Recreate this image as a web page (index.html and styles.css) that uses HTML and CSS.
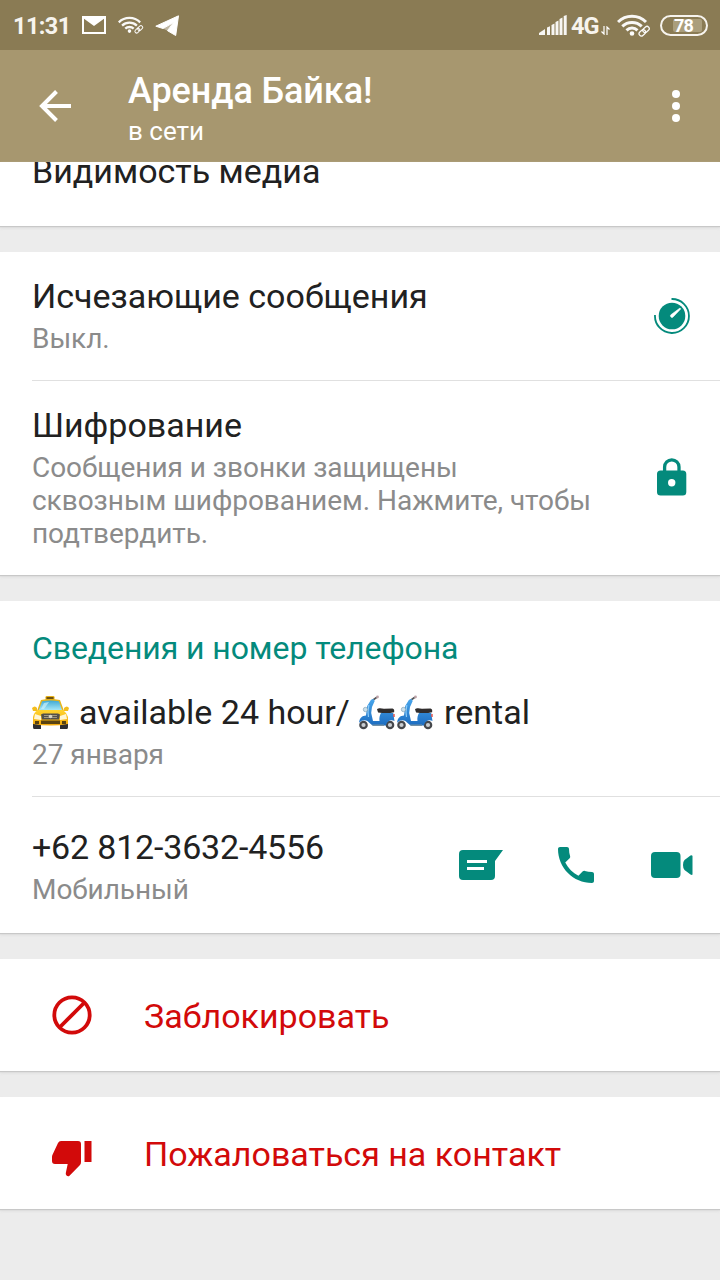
FILE: index.html
```html
<!DOCTYPE html>
<html lang="ru">
<head>
<meta charset="utf-8">
<title>Аренда Байка!</title>
<link rel="stylesheet" href="styles.css">
</head>
<body>
<svg class="defs" aria-hidden="true">
  <defs>
    <linearGradient id="glass" x1="0" y1="0" x2="0" y2="1"><stop offset="0" stop-color="#3fa9d4"/><stop offset="1" stop-color="#a5e6f7"/></linearGradient>
    <linearGradient id="body" x1="0" y1="0" x2="0" y2="1"><stop offset="0" stop-color="#ffd42e"/><stop offset="1" stop-color="#f3a90c"/></linearGradient>
    <linearGradient id="blue" x1="0" y1="0" x2="0" y2="1"><stop offset="0" stop-color="#48a6ec"/><stop offset="1" stop-color="#1c6cc0"/></linearGradient>
    <symbol id="scooter" viewBox="0 0 38 36">
      <circle cx="5.500" cy="30" r="4.300" fill="#45474b"/><circle cx="5.500" cy="30" r="2.100" fill="#c9cdd1"/>
      <circle cx="32" cy="30" r="4.300" fill="#45474b"/><circle cx="32" cy="30" r="2.100" fill="#c9cdd1"/>
      <path d="M15 5l3.500-2.500" stroke="#55565b" stroke-width="1.600" fill="none" stroke-linecap="round"/>
      <circle cx="19.500" cy="2" r="1.400" fill="#bda3a8"/>
      <path d="M13 4.800l2.500-.8 1.200 2L14 12l-.8 6 1.800 8h6.500c-.5-3 .2-6 1.500-8h12.200l.8 5 .5 3c-3-1.500-7.500-.5-8.500 4.500H14.500l-3.500-3c-2.500-3-7-2.800-9.800.3-.2-4.500 3.300-7.300 6.800-7.300l1.200-9.500z" fill="url(#blue)"/>
      <path d="M10.800 10l-.8 7 .5 5" stroke="#8ccbf7" stroke-width="1.200" fill="none"/>
      <circle cx="7.500" cy="14.500" r="2.200" fill="#c9e0ed" stroke="#7695aa" stroke-width=".6"/>
      <path d="M19 14.300c1.500-1.500 4-1.100 7-.6l8.500-.2q2.300.8 1.600 3.700c-5 1.300-11 .9-16 .3z" fill="#302d2d"/>
      <path d="M15 31h11v-1.500H14z" fill="#7190a6"/>
      <path d="M36 19v3" stroke="#e34b43" stroke-width="1.400"/>
    </symbol>
  </defs>
</svg>
<div class="screen">
  <header class="status">
    <span class="clock">11:31</span>
    <svg class="st-mail" width="24" height="18" viewBox="0 0 24 18"><path fill="none" stroke="#fff" stroke-width="2" d="M1 1h22v16H1z"/><path fill="#fff" d="M1 0h22v2L12 10 1 2z"/></svg>
    <svg class="st-wifi" width="26" height="20" viewBox="0 0 34 23"><use href="#wifi"/></svg>
    <svg class="st-tg" width="25" height="22" viewBox="0 0 25 22"><path fill="#fff" stroke="#fff" stroke-linejoin="round" d="M23.500.8L20.700 20.500l-8.200-4.800L18.500 7.500 8 13.500.8 11.200z"/><path fill="#fff" d="M8 13.500L18.500 7.500 12.500 15.700z" fill-opacity=".45"/></svg>
    <span class="spring"></span>
    <svg class="st-signal" width="28" height="20" viewBox="0 0 28 20"><path fill="#fff" fill-opacity=".93" d="M0 18l6-4v6H0zM8 12.500l3-1.200V20H8zM12.500 10l3-1.500V20h-3zM16.500 7l3-1.500V20h-3zM20.500 4l3-1.500V20h-3zM24.700 1l3-1v20h-3z"/></svg>
    <span class="net">4G</span>
    <svg class="st-arrows" width="9" height="9" viewBox="0 0 9 9"><path fill="none" stroke="#fff" stroke-width="1.200" d="M3 0v8L.5 5.500M6 9V1l2.500 2.500"/></svg>
    <svg class="st-wifi2" width="34" height="23" viewBox="0 0 34 23">
      <g id="wifi" fill="none" stroke="#fff" stroke-opacity=".95">
        <path stroke-width="3" d="M1 8a20 20 0 0 1 28 0M5.300 12.300a14 14 0 0 1 19.400 0M9.500 16.300a8 8 0 0 1 11 0"/>
        <circle cx="15" cy="19.500" r="1.600" fill="#fff" stroke-width="1.500"/>
        <g stroke-width="1.300" transform="rotate(-42 27 17)"><rect x="21" y="15" width="7" height="4.500" rx="2.200"/><rect x="26" y="15" width="7" height="4.500" rx="2.200"/></g>
      </g>
    </svg>
    <span class="battery"><span class="level">78</span></span>
  </header>

  <div class="appbar">
    <svg class="back" width="32" height="32" viewBox="0 0 32 32"><path fill="none" stroke="#fff" stroke-width="4" d="M32 16H4M17.500 1.500L3 16l14.500 14.500"/></svg>
    <div class="heading">
      <div class="name">Аренда Байка!</div>
      <div class="presence">в сети</div>
    </div>
    <svg class="more" width="8" height="32" viewBox="0 0 8 32"><g fill="#fff"><circle cx="4" cy="4" r="4"/><circle cx="4" cy="16" r="4"/><circle cx="4" cy="28" r="4"/></g></svg>
  </div>

  <main class="content">
    <section class="card media"><div class="title t-media">Видимость медиа</div></section>

    <section class="card">
      <div class="row timer-row">
        <div class="text">
          <div class="title t-timer">Исчезающие сообщения</div>
          <div class="sub">Выкл.</div>
        </div>
        <svg class="i-timer" width="36" height="36" viewBox="0 0 36 36"><circle cx="18" cy="18" r="13.300" fill="#048a7c"/><path fill="none" stroke="#048a7c" stroke-width="1.800" d="M17.500 1A17 17 0 1 1 1 17"/><path fill="#fff" d="M26 10l.7.900-7.600 8a1.500 1.500 0 0 1-2.200-2.100z" stroke="#fff" stroke-width=".6"/></svg>
      </div>
      <div class="row crypt-row">
        <div class="text">
          <div class="title t-crypt">Шифрование</div>
          <div class="sub">Сообщения и звонки защищены<br>сквозным шифрованием. Нажмите, чтобы<br>подтвердить.</div>
        </div>
        <svg class="i-lock" width="30" height="38" viewBox="0 0 30 38"><path fill="none" stroke="#048a7c" stroke-width="3.300" d="M7.600 14V9a7.200 7.200 0 0 1 14.400 0v5"/><rect y="12.500" width="29.300" height="25" rx="3.500" fill="#048a7c"/><circle cx="14.700" cy="24.800" r="3.700" fill="#fff"/></svg>
      </div>
    </section>

    <section class="card">
      <div class="row about-row">
        <div class="text">
          <div class="title section-title">Сведения и номер телефона</div>
          <div class="title about">
            <svg class="taxi" role="img" aria-label="🚖" width="37" height="35" viewBox="0 0 37 35">
              <path fill="#2e2e33" d="M1 27h8v7H2q-1 0-1-2zM28 27h8v5q0 2-1 2h-7z"/>
              <rect x="13.500" y="1" width="9" height="5" rx="1.200" fill="#e7b119"/><rect x="14.500" y="2" width="7" height="2.300" fill="#6b5114"/>
              <path fill="#e9b519" d="M9 5q9-2 19 0l4 11H5z"/>
              <path fill="url(#glass)" d="M10 6.300q8-1.500 17 0l3 8.700H7z"/>
              <path fill="#d9f6fd" d="M12 8l5-1-5 7H9z" opacity=".6"/>
              <path fill="#f4bd1c" d="M0 13q3-3 5 0v3H1zM32 13q3-3 5 0l-1 3h-4z"/>
              <path fill="url(#body)" d="M6 15h25q4 3 5 7v7q-17 3-35 0v-7q1-5 5-7z"/>
              <path fill="#fff6d4" d="M3 19l6 2v4l-7-1zM34 19l-6 2v4l7-1z"/>
              <path fill="#514f4b" d="M11 18.500h15l2 1-1 5H10l-1-5z"/><path stroke="#b4aa8b" stroke-width=".8" d="M12 20.500h13M12 22.500h13"/><circle cx="18.500" cy="21.500" r="1.800" fill="#d7d4c7"/>
              <path fill="#594312" d="M3 26h4v3H3zM9 25.500h19V29H9zM30 26h4v3h-4z"/>
            </svg><span class="about-text">available 24 hour/</span><svg class="scooter first" role="img" aria-label="🛵" width="38" height="36"><use href="#scooter"/></svg><svg class="scooter" role="img" aria-label="🛵" width="38" height="36"><use href="#scooter"/></svg><span class="rental">rental</span>
          </div>
          <div class="sub">27 января</div>
        </div>
      </div>
      <div class="row phone-row">
        <div class="text">
          <div class="title t-phone">+62 812-3632-4556</div>
          <div class="sub">Мобильный</div>
        </div>
        <div class="actions">
          <svg width="44" height="30" viewBox="0 0 44 30"><path fill="#048a7c" d="M4 0h40l-8 11v15a4 4 0 0 1-4 4H4a4 4 0 0 1-4-4V4a4 4 0 0 1 4-4z"/><path stroke="#fff" stroke-width="3" d="M8 11.500h20M8 18.500h17"/></svg>
          <svg class="call" width="36" height="36" viewBox="3 3 18 18"><path fill="#048a7c" d="M6.620 10.790c1.440 2.830 3.760 5.140 6.590 6.590l2.200-2.200c.27-.27.670-.36 1.020-.24 1.120.37 2.330.57 3.570.57.550 0 1 .45 1 1V20c0 .55-.45 1-1 1-9.390 0-17-7.610-17-17 0-.55.450-1 1-1h3.500c.55 0 1 .45 1 1 0 1.250.2 2.450.57 3.570.11.350.03.740-.25 1.020l-2.200 2.200z"/></svg>
          <svg width="42" height="26" viewBox="0 0 42 26"><rect width="29.500" height="26" rx="4" fill="#048a7c"/><path fill="#048a7c" d="M41.500 4v18.500q-.5.800-2 0L33.500 18Q32 16.500 32 13t1.500-5l6-4.500q1.500-.8 2 .5z"/></svg>
        </div>
      </div>
    </section>

    <section class="card action">
      <svg width="40" height="40" viewBox="0 0 40 40"><g fill="none" stroke="#d20a0a" stroke-width="3.800"><circle cx="20" cy="20" r="17.700"/><path d="M7.500 32.500l25-25"/></g></svg>
      <div class="title t-block">Заблокировать</div>
    </section>

    <section class="card action report">
      <svg width="40" height="36" viewBox="0 0 40 36"><path fill="#d20a0a" d="M9 0h17q3 0 3 3v18q0 2-1 3L17.500 34.700q-1.500 1.200-3-.3-1-1-.7-2.400L15.700 23H3q-3 0-3-3v-4q0-1 .4-2L6 2Q7 0 9 0zM32.500 0h7v21h-7z"/></svg>
      <div class="title t-report">Пожаловаться на контакт</div>
    </section>
  </main>
</div>
</body>
</html>
```
FILE: styles.css
```css
body { margin: 0; font-family: Roboto, "Noto Sans", sans-serif; }
.defs { position: absolute; width: 0; height: 0; }
svg { display: block; flex: none; }
.screen { width: 720px; height: 1280px; overflow: hidden; background: #ececec; display: flex; flex-direction: column; }

.status { height: 50px; flex: none; box-sizing: border-box; padding: 0 12px 0 13px; display: flex; align-items: center; background: #8a7b54; color: #f7f4ee; font-weight: 700; }
.clock { font-size: 23.5px; width: 69px; line-height: 50px; padding-top: 2px; white-space: nowrap; letter-spacing: -.6px; }
.st-wifi { margin-left: 12px; }
.st-tg { margin: 2px 0 0 11px; }
.spring { flex: 1; }
.net { font-size: 23.5px; letter-spacing: -1px; margin-left: 4px; padding-top: 2px; width: 30px; }
.st-arrows { margin-top: 10px; }
.st-wifi2 { margin-left: 7px; }
.battery { box-sizing: border-box; width: 48px; height: 21px; margin-left: 9px; border: 2px solid #f7f4ee; border-radius: 11px; display: flex; align-items: center; justify-content: center; }
.level { width: 29px; height: 13px; margin-left: 7px; background: #aa9e7c; font-size: 18px; line-height: 14px; text-indent: 1px; letter-spacing: -.8px; border-radius: 2px; color: #fff; }

.appbar { height: 112px; flex: none; display: flex; align-items: center; box-sizing: border-box; padding: 0 40px 0 39px; background: #a7976f; color: #fff; }
.heading { margin-left: 57px; flex: 1; height: 112px; box-sizing: border-box; padding-top: 20px; }
.name { font-size: 36px; font-weight: 500; line-height: 42px; letter-spacing: -.1px; }
.presence { font-size: 26px; line-height: 32px; margin-top: 3px; }

.content { display: flex; flex-direction: column; gap: 26px; }
.card { background: #fff; box-shadow: 0 1px 1px #c8c8c8, 0 2px 3px #dcdcdc; }
.media { height: 64px; overflow: hidden; padding-left: 32px; }
.media .title { margin-top: -11px; }
.row { display: flex; margin-left: 32px; box-sizing: border-box; }
.row + .row { border-top: 1px solid #e0e0e0; }
.text { flex: 1; padding-top: 24px; }
.title { font-size: 34px; line-height: 40px; color: #212121; white-space: nowrap; }
.sub { font-size: 28px; line-height: 33px; margin-top: 6px; color: #8b8b8b; white-space: nowrap; letter-spacing: -.04px; }
.timer-row { height: 128px; padding-right: 30px; align-items: flex-start; }
.i-timer { margin-top: 46px; }
.crypt-row { height: 195px; padding-right: 33px; }
.i-lock { margin-top: 77px; }
.about-row { height: 195px; }
.about-row .text { padding-top: 27px; }
.title.section-title { color: #048a7c; font-size: 32px; letter-spacing: -.08px; }
.about { display: flex; margin-top: 24px; }
.taxi { margin-top: 3px; }
.about-text { margin-left: 10px; width: 279px; }
.scooter { margin-top: 3px; }
.rental { margin-left: 10px; }
.t-phone { letter-spacing: -.18px; }
.phone-row { height: 137px; padding-right: 27px; }
.phone-row .text { padding-top: 30px; }
.actions { display: flex; align-items: center; gap: 56px; height: 136px; }
.call { margin: 0 1px 0 -1px; }
.action { height: 112px; display: flex; align-items: center; padding-left: 52px; }
.action .title { margin-left: 52px; color: #d20a0a; padding-top: 1px; }
.report svg { margin-top: 11px; }
```
